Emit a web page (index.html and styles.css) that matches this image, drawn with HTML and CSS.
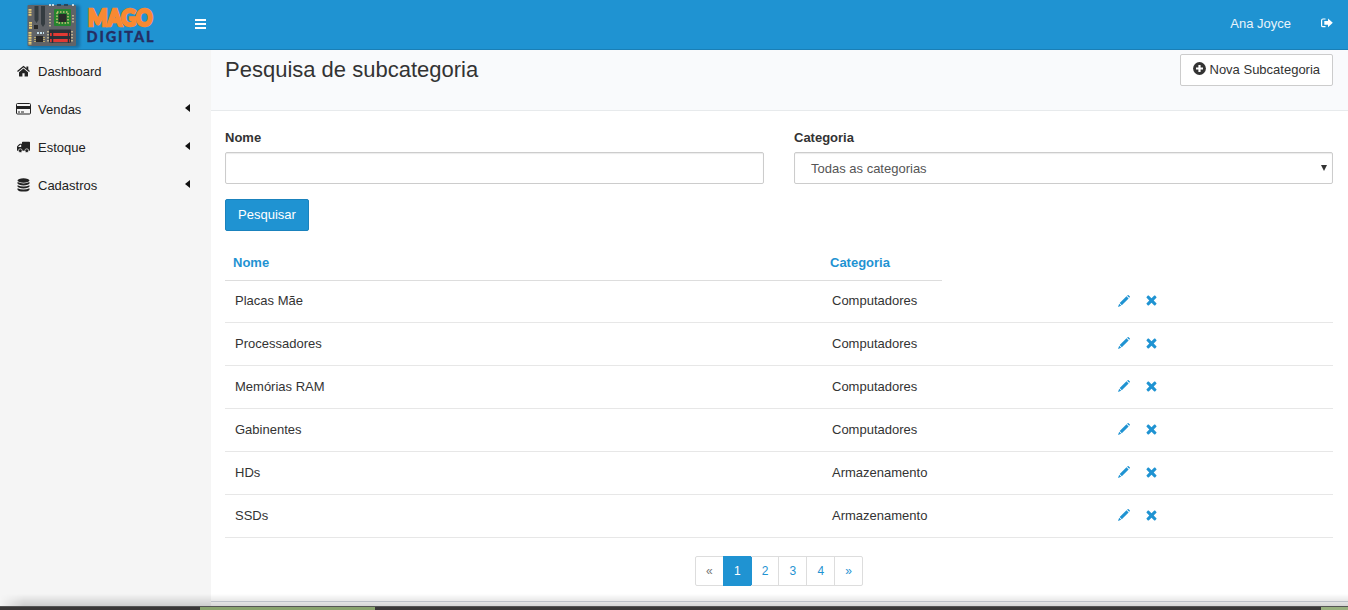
FILE: index.html
```html
<!DOCTYPE html>
<html lang="pt-BR">
<head>
<meta charset="utf-8">
<title>Pesquisa de subcategoria</title>
<link rel="stylesheet" href="styles.css">
</head>
<body>
<svg class="defs" width="0" height="0">
  <symbol id="pencil" viewBox="0 0 12 12"><path d="M9.1.7l.5-.5q.5-.4 1 0l1.1 1.1q.5.5 0 1l-.5.5zM8.500 1.300l2.100 2.100-6.800 6.800-2.100-2.100zM1.200 8.700l2 2L0 11.900z"/></symbol>
  <symbol id="remove" viewBox="0 0 11 11"><path d="M2.700.6L5.500 3.300 8.300.6q.4-.3.8 0l1.300 1.300q.3.4 0 .8L7.700 5.500l2.700 2.800q.3.4 0 .8L9.100 10.400q-.4.3-.8 0L5.500 7.700l-2.800 2.700q-.4.3-.8 0L.6 9.100q-.3-.4 0-.8L3.300 5.500.6 2.700q-.3-.4 0-.8L1.900.6q.4-.3.8 0z"/></symbol>
</svg>
<header class="topbar">
  <a class="logo" href="#">
    <svg width="136" height="50" viewBox="0 0 136 50">
      <rect class="board-shadow" x="5" y="5" width="51" height="43" rx="3"/>
      <rect x="3.500" y="5" width="48.500" height="41" rx="1" fill="#606367"/>
      <path d="M10.500 6h4v14l-2 3-2-3zM17 6h4v18l-2 3-2-3z" fill="#343c40"/>
      <path d="M10 25h4v4h-4zM12 36h7v6h-7z" fill="#292929"/>
      <rect x="30" y="9" width="17" height="17" rx="1" fill="#25852f"/>
      <path d="M33 12h11v11H33z" fill="none" stroke="#c9c078" stroke-width="1.500" stroke-dasharray="1.500 1.500"/>
      <rect x="34.500" y="14" width="8" height="8" fill="#292c29"/>
      <path d="M25 29.500h22v13H25z" fill="#2c3238"/>
      <path d="M26 33h20v3H26zM26 39h20v3H26z" fill="#e33a34"/>
      <path d="M28.500 30v13M44.500 30v13" stroke="#283038" stroke-width="1.500"/>
      <path d="M6 9v7M6.500 22v7M6 32v13" stroke="#e7cc78" stroke-width="3" stroke-dasharray="1.700 .8"/>
      <path d="M26 13v14M49 15v8M24 31v12M48 31v12" stroke="#d5c89a" stroke-width="1.500" stroke-dasharray="1.500 1.500"/>
      <path d="M25 5h5M48 5h2M13 33h7" stroke="#c1dbe7" stroke-width="2" stroke-dasharray="2 1"/>
      <path d="M33 5h4M40 5h4" stroke="#27475d" stroke-width="2"/>
      <path d="M11 37v5M20 37v5" stroke="#d4bc68" stroke-width="1.500" stroke-dasharray="1 1"/>
      <text class="brand-main" x="64" y="26" textLength="64.500" lengthAdjust="spacingAndGlyphs">MAGO</text>
      <text class="brand-sub" x="62.500" y="42" textLength="67">DIGITAL</text>
    </svg>
  </a>
  <a class="toggle" href="#"><i></i><i></i><i></i></a>
  <span class="user">Ana Joyce</span>
  <svg class="logout" width="12" height="10" viewBox="0 0 12 10"><path d="M4.500 1H2Q.6 1 .6 2.400v5Q.6 8.700 2 8.700h2.500" fill="none" stroke="#fff" stroke-width="1.200"/><path d="M3.300 3H7V.4L11.800 4.800 7 9.200V6.700H3.300z" fill="#fff"/></svg>
</header>
<div class="layout">
  <nav class="sidebar">
    <a href="#"><svg width="15" height="14" viewBox="0 0 15 14"><path d="M7.500 4.500L12 8.200v3.900q0 .5-.6.500H8.600V9.200H6.400v3.400H3.600q-.6 0-.6-.5V8.200z"/><path d="M1.500 7.600l6-5 6 5" fill="none" stroke="#222" stroke-width="1.300"/><path d="M10.400 2.400h1.900v4l-1.900-1.600z"/></svg><span>Dashboard</span></a>
    <a href="#"><svg width="15" height="14" viewBox="0 0 15 14"><rect x=".5" y="1.500" width="14" height="10.500" rx="1" fill="none" stroke="#222"/><path d="M1 4h13v3H1zM2 9.500h2v1H2zM5 9.500h3v1H5z"/></svg><span>Vendas</span><b></b></a>
    <a href="#"><svg width="15" height="14" viewBox="0 0 15 14"><path d="M6 2.500q0-.7.700-.7h6.600q.7 0 .7.700v8.200H1V7q0-.5.400-.9l2-2q.4-.4.900-.4H6zM5.200 4.700h-.9L2.200 6.800v.3h3z" fill-rule="evenodd"/><g stroke="#f5f5f5" stroke-width=".7"><circle cx="4.300" cy="10.700" r="1.900"/><circle cx="10.800" cy="10.700" r="1.900"/></g></svg><span>Estoque</span><b></b></a>
    <a href="#"><svg width="15" height="14" viewBox="0 0 15 14"><ellipse cx="7.500" cy="2.500" rx="6" ry="2.200"/><path d="M1.500 4.100q6 2.700 12 0v1.500q-1 1.800-6 1.800t-6-1.800zM1.500 7.200q6 2.700 12 0v1.400q-1 1.800-6 1.800t-6-1.800zM1.500 10.200q6 2.700 12 0v1.500q-1 1.900-6 1.900t-6-1.900z"/></svg><span>Cadastros</span><b></b></a>
  </nav>
  <main>
    <section class="page-head">
      <h1>Pesquisa de subcategoria</h1>
      <a class="btn" href="#"><svg width="13" height="13" viewBox="0 0 13 13"><circle cx="6.500" cy="6.500" r="6.400" fill="#333"/><path d="M6.500 3v7M3 6.500h7" stroke="#fff" stroke-width="2.200"/></svg>Nova Subcategoria</a>
    </section>
    <section class="content">
      <form class="filters">
        <label>Nome<input class="field" type="text"></label>
        <label>Categoria<span class="field select">Todas as categorias<svg width="6" height="6" viewBox="0 0 6 6"><path d="M0 0h6L3 6z"/></svg></span></label>
      </form>
      <button class="primary" type="button">Pesquisar</button>
      <table>
        <thead><tr><th class="name">Nome</th><th class="category">Categoria</th></tr></thead>
        <tbody>
          <tr><td>Placas Mãe</td><td colspan="2">Computadores</td><td class="actions"><svg class="edit"><use href="#pencil"/></svg><svg class="delete"><use href="#remove"/></svg></td></tr>
          <tr><td>Processadores</td><td colspan="2">Computadores</td><td class="actions"><svg class="edit"><use href="#pencil"/></svg><svg class="delete"><use href="#remove"/></svg></td></tr>
          <tr><td>Memórias RAM</td><td colspan="2">Computadores</td><td class="actions"><svg class="edit"><use href="#pencil"/></svg><svg class="delete"><use href="#remove"/></svg></td></tr>
          <tr><td>Gabinentes</td><td colspan="2">Computadores</td><td class="actions"><svg class="edit"><use href="#pencil"/></svg><svg class="delete"><use href="#remove"/></svg></td></tr>
          <tr><td>HDs</td><td colspan="2">Armazenamento</td><td class="actions"><svg class="edit"><use href="#pencil"/></svg><svg class="delete"><use href="#remove"/></svg></td></tr>
          <tr><td>SSDs</td><td colspan="2">Armazenamento</td><td class="actions"><svg class="edit"><use href="#pencil"/></svg><svg class="delete"><use href="#remove"/></svg></td></tr>
        </tbody>
      </table>
      <div class="pages"><a class="disabled">«</a><a class="active">1</a><a>2</a><a>3</a><a>4</a><a>»</a></div>
    </section>
    <footer></footer>
  </main>
</div>
<div class="shade"></div>
<div class="taskbar"><i class="task"></i><i class="corner"></i></div>
</body>
</html>
```
FILE: styles.css
```css
* { box-sizing: border-box; }
body { margin: 0; height: 610px; overflow: hidden; background: #fff; font: 13px/20px "Liberation Sans", Arial, sans-serif; color: #333; }
a { color: inherit; text-decoration: none; }
.defs { position: absolute; }
.topbar { display: flex; align-items: center; height: 50px; background: #1f93d2; border-bottom: 1px solid #1a7fb6; padding: 0 15px 0 24px; color: #fff; }
.logo { height: 50px; }
.logo svg { display: block; overflow: visible; }
.board-shadow { fill: #125a86; opacity: .65; filter: blur(1.5px); }
.brand-main { font: 900 22px Lato, sans-serif; fill: #f88932; stroke: #f88932; stroke-width: 2.6px; }
.brand-sub { font: 900 14.5px Lato, sans-serif; fill: #252e63; stroke: #252e63; stroke-width: .3px; }
.toggle { display: flex; flex-direction: column; gap: 2px; width: 11px; margin: 0 auto 2px 35px; }
.toggle i { height: 2px; background: #fff; }
.user { margin: 0 30px 1px 0; color: #e9f4fb; }
.logout { margin: 0 0 3px; }
.layout { display: flex; height: 556px; }
.sidebar { width: 211px; background: #f5f5f5; padding-top: 2px; color: #222; }
.sidebar a { display: flex; align-items: center; height: 38px; padding: 0 21px 0 16px; }
.sidebar span { padding-top: 2px; }
.sidebar svg { margin-right: 7px; fill: #222; }
.sidebar b { margin: 0 0 3px auto; border: solid transparent; border-width: 4px 5px 4px 0; border-right-color: #111; }
main { flex: 1; display: flex; flex-direction: column; }
.page-head { display: flex; justify-content: space-between; height: 61px; padding: 4px 15px 0 14px; background: #f9fafc; border-bottom: 1px solid #e7eaec; }
h1 { margin: 0; font-size: 22px; font-weight: normal; line-height: 32px; }
.btn { display: flex; align-items: center; gap: 3.5px; width: 153px; height: 32px; padding: 0 0 1px 12px; border: 1px solid #ccc; border-radius: 2px; background: #fff; white-space: nowrap; }
.btn svg { margin-bottom: 2px; }
.content { flex: 1; padding: 17px 15px 0 14px; }
.filters { display: grid; grid-template-columns: 1fr 1fr; gap: 30px; }
.filters label { font-weight: bold; }
.field { display: flex; align-items: center; width: 100%; height: 32px; margin-top: 4px; border: 1px solid #ccc; border-radius: 2px; background: #fff; box-shadow: inset 0 1px 1px rgba(0,0,0,.08); }
.select { justify-content: space-between; padding: 2px 5px 0 16px; font-weight: normal; color: #555; }
.select svg { margin-bottom: 2px; fill: #333; }
.primary { display: block; width: 84px; height: 32px; margin-top: 15px; padding: 0 0 1px; border: 1px solid #1a82bd; border-radius: 2px; background: #1f93d2; color: #fff; font: inherit; }
table { width: 1108px; margin-top: 14px; border-collapse: separate; border-spacing: 0; table-layout: fixed; }
th { height: 36px; padding: 0 8px; text-align: left; color: #1f93d2; border-bottom: 1px solid #ddd; }
.name { width: 597px; }
.category { width: 120px; }
td { height: 43px; padding: 0 10px 1px; border-bottom: 1px solid #e7e7e7; }
tbody tr:first-child td { height: 42px; }
td.actions { padding: 0 0 3px; }
.actions svg { margin-left: -20px; fill: #1f93d2; vertical-align: middle; }
.actions .edit { width: 12px; height: 12px; margin-right: 16px; }
.actions .delete { width: 11px; height: 11px; margin-left: 0; }
.pages { display: flex; width: 168px; height: 30px; margin: 18px auto 0; border: 1px solid #ddd; border-radius: 2px; font-size: 12px; line-height: 28px; color: #1f93d2; }
.pages a { flex: 1; text-align: center; border-left: 1px solid #ddd; }
.pages a:first-child { border-left: 0; }
.pages .disabled { color: #777; }
.pages .active { margin: -1px 0; padding-top: 1px; border-color: #1f93d2; background: #1f93d2; color: #fff; }
.pages .active + a { border-color: #1f93d2; }
footer { height: 5px; border-top: 1px solid #d2d6de; }
.shade { position: absolute; left: 0; right: 0; top: 594px; height: 12px; background: linear-gradient(transparent, rgba(0,0,0,.16)); -webkit-mask-image: linear-gradient(90deg, transparent, #000 24px); mask-image: linear-gradient(90deg, transparent, #000 24px); }
.taskbar { display: flex; justify-content: space-between; height: 4px; padding-left: 200px; background: #3a3838; border-top: 1px solid #555; }
.task { width: 175px; background: #89a36e; }
.corner { width: 27px; background: #98b07f; }
```
